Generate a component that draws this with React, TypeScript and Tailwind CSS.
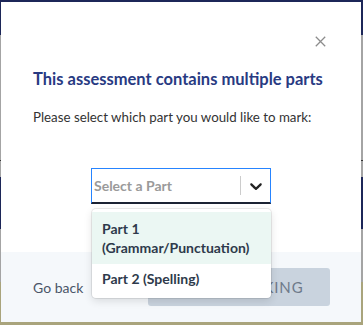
import React from 'react';

const font = { fontFamily: '"Lato", "Noto Sans", sans-serif' };

const Chevron = () => (
  <svg viewBox="0 0 20 20" className="w-5 h-5 fill-[#222]">
    <path d="M4.516 7.548c0.436-0.446 1.043-0.481 1.576 0l3.908 3.747 3.908-3.747c0.533-0.481 1.141-0.446 1.574 0 0.436 0.445 0.408 1.197 0 1.615-0.406 0.418-4.695 4.502-4.695 4.502-0.217 0.223-0.502 0.335-0.787 0.335s-0.57-0.112-0.789-0.335c0 0-4.287-4.084-4.695-4.502s-0.436-1.17 0-1.615z" />
  </svg>
);

export default function App() {
  return (
    <div className="relative w-[363px] h-[325px] overflow-hidden" style={font}>
      {/* dimmed page behind the modal */}
      <div className="flex flex-col h-full">
        <div className="h-[35px] bg-[#1c2658]" />
        <div className="h-[125px] bg-[#a4a4a4]" />
        <div className="h-px bg-[#333]" />
        <div className="h-[16px] bg-[#a4a4a4]" />
        <div className="h-[52px] bg-[#1c2658]" />
        <div className="h-[53px] bg-[#a4a4a4]" />
        <div className="flex-1 bg-[#a9a47c]" />
      </div>

      <div className="absolute left-[1px] top-[2px] w-[360px] h-[320px] bg-white flex flex-col">
        <button className="absolute right-[34px] top-[32px] w-[14px] h-[14px] flex items-center justify-center">
          <svg viewBox="0 0 14 14" className="w-[11px] h-[11px] stroke-[#8c8c8c]" strokeWidth="1.6">
            <path d="M1 1 13 13M13 1 1 13" />
          </svg>
        </button>

        <div className="pt-[66px] px-[32px]">
          <h2 className="text-[16.5px] font-bold text-[#283a82] leading-[22px] whitespace-nowrap">
            This assessment contains multiple parts
          </h2>
          <p className="mt-[18px] text-[13.3px] text-[#333] leading-[18px] whitespace-nowrap">
            Please select which part you would like to mark:
          </p>
        </div>

        <div className="flex justify-center pt-[42px] relative">
          <div className="w-[180px] h-[36px] border border-[#2684ff] border-b-2 border-b-[#1b2233] flex items-center bg-white">
            <span className="flex-1 pl-[2px] text-[14px] font-bold text-[#9a9a9a]">Select a Part</span>
            <div className="w-px h-[19px] bg-[#ccc]" />
            <div className="w-[29px] flex justify-center">
              <Chevron />
            </div>
          </div>

          <div className="absolute left-[91px] top-[83px] w-[179px] bg-white rounded-[4px] shadow-[0_0_0_1px_rgba(0,0,0,0.08),0_3px_8px_rgba(0,0,0,0.12)] py-[3px] z-10">
            <div className="bg-[#ebf7f3] px-[10px] py-[7px] text-[14px] font-bold text-[#2e3a4b] leading-[19px]">
              Part 1 (Grammar/Punctuation)
            </div>
            <div className="px-[10px] pt-[5px] pb-[7px] text-[14px] font-bold text-[#2e3a4b] leading-[19px]">
              Part 2 (Spelling)
            </div>
          </div>
        </div>

        <div className="mt-auto h-[70px] bg-[#f5f8fb] flex items-center pl-[32px] pr-[31px]">
          <span className="text-[14px] text-[#4a5568]">Go back</span>
          <div className="ml-auto w-[182px] h-[38px] rounded-[3px] bg-[#c9d3de] flex items-center justify-center text-[15px] text-[#6e7a8a] tracking-[0.06em]">
            START MARKING
          </div>
        </div>
      </div>
    </div>
  );
}
